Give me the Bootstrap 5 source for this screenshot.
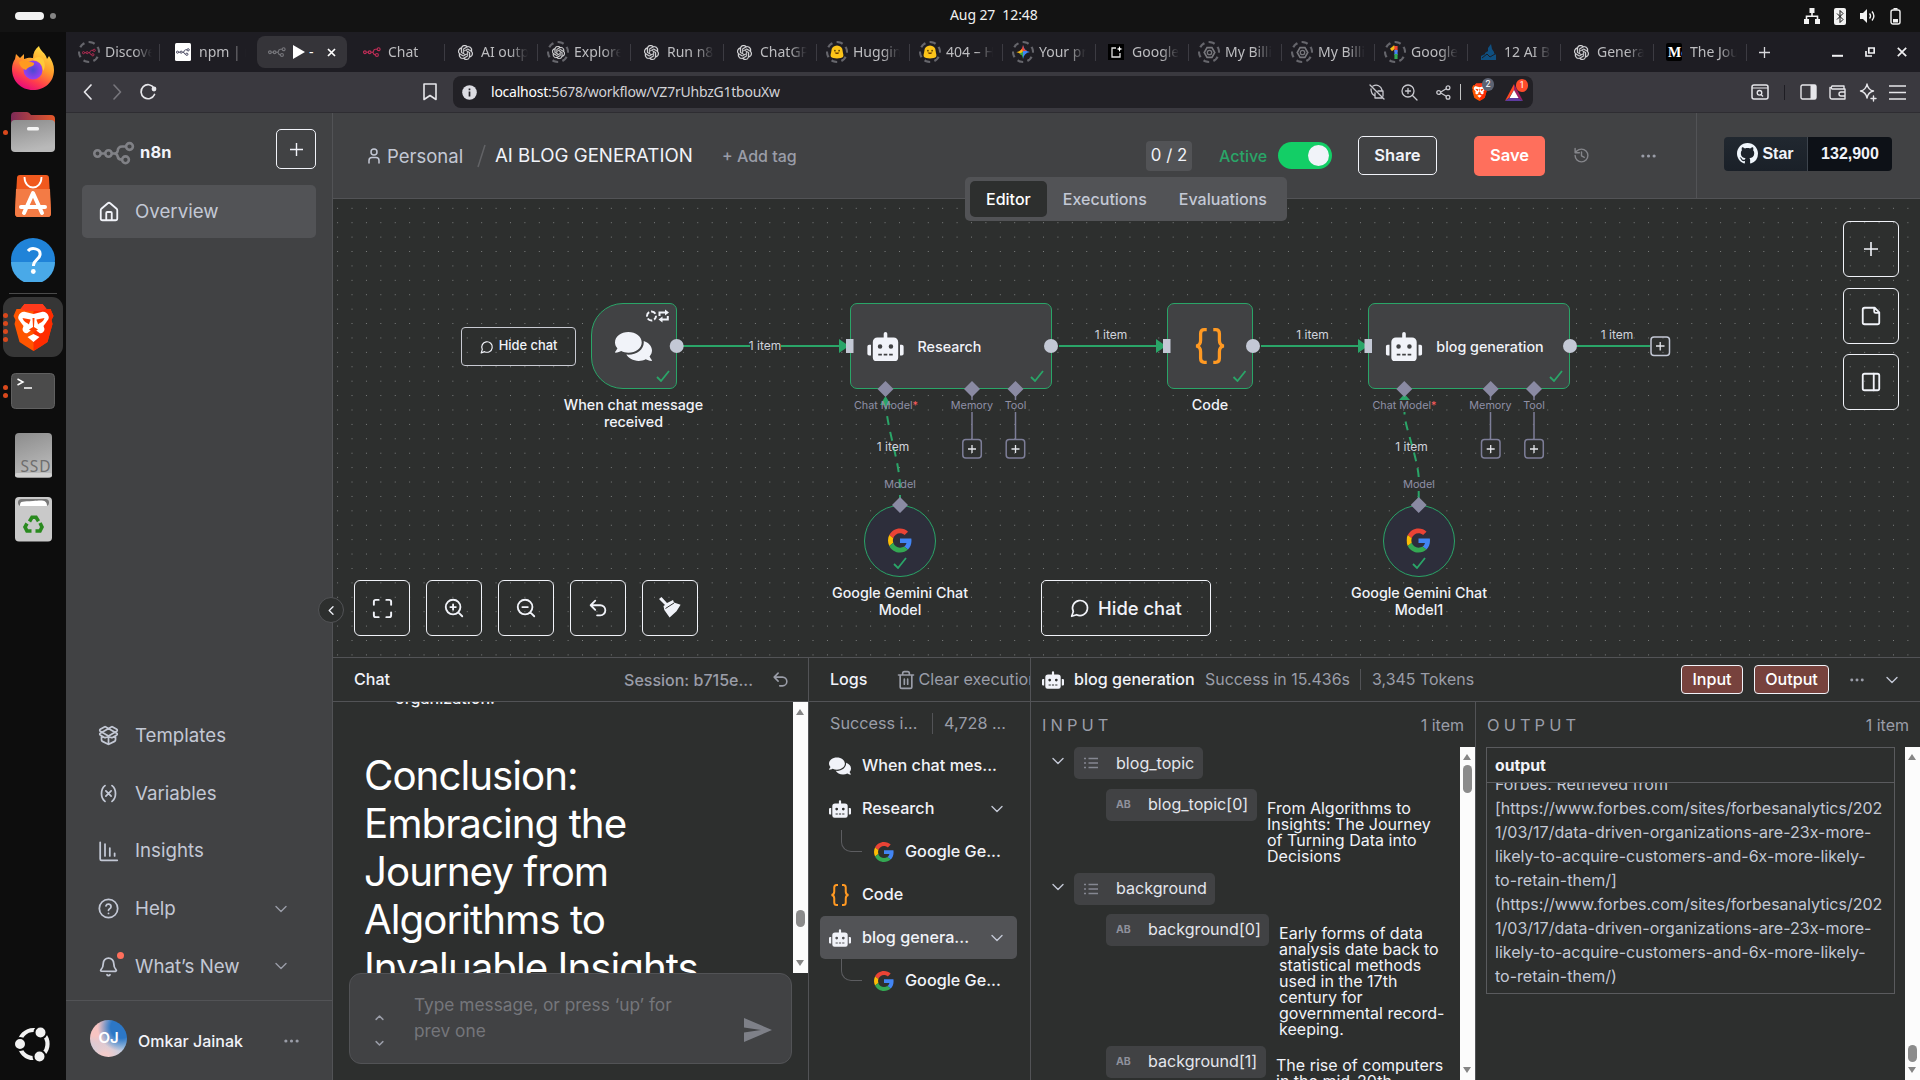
<!DOCTYPE html>
<html lang="en" data-bs-theme="dark">
<head>
<meta charset="utf-8">
<title>AI BLOG GENERATION - n8n</title>
<link href="https://cdn.jsdelivr.net/npm/bootstrap@5.3.0/dist/css/bootstrap.min.css" rel="stylesheet">
<style>
:root{--panel:#414244;--canvas:#2d2f2e;--line:#525356;--raise:#525356;--ink:#f1f3f9;--soft:#c3c8d5;--dim:#9a9da8;--ok:#2aa568;--pin:#8a8aa3}
html,body{height:1080px;overflow:hidden}
body{font-family:Inter,"Liberation Sans",sans-serif;font-size:16.1px;line-height:1.25;background:#0d0d0d;color:var(--ink);margin:0}
svg{display:block;flex:none}
.ln{fill:none;stroke:currentColor;stroke-width:2;stroke-linecap:round;stroke-linejoin:round}
.fl{fill:currentColor}
.sysfont{font-family:"Noto Sans","Open Sans",sans-serif}
.nw{white-space:nowrap}
.w500{font-weight:500}
.soft{color:var(--soft)}.dim{color:var(--dim)}

/* desktop bar */
.topbar{height:32px;background:#131313;position:relative;font-size:14px}
.pill{width:29px;height:8px;border-radius:4px;background:#f2f2f2;margin-left:15px}
.pdot{width:6px;height:6px;border-radius:3px;background:#858585;margin-left:6px}
.clock{position:absolute;left:950px;top:0;line-height:30px;white-space:pre;color:#f0f0f0;letter-spacing:-.1px}
.tray{gap:14px;padding-right:18px;color:#f2f2f2}

/* dock */
.dock{width:66px;height:1048px;background:#0d0d0d;padding-top:4px}
.slot{height:64px;position:relative}
.slot-on::before{content:"";position:absolute;left:3px;top:2px;width:60px;height:60px;border-radius:11px;background:#363636}
.slot svg{position:relative}
.dock-sep{height:3px;padding:1px 9px}
.dock-sep div{height:1px;background:#4a4a4a}
.runs{position:absolute;left:3px;top:0;height:64px;width:5px;display:flex;flex-direction:column;justify-content:center;gap:3px}
.runs i{width:5px;height:5px;border-radius:50%;background:#d9481c}

/* browser chrome */
.browser{width:1854px;height:1048px}
.tabstrip{height:40px;background:#1e1d23;color:#bdbdc0;font-size:14px}
.btab{width:93px;flex:none;padding-left:10px;position:relative;height:40px}
.btab::after{content:"";position:absolute;right:-1px;top:12px;width:1px;height:17px;background:#3c3b42}
.btab.nosep::after{display:none}
.fav{width:22px;height:22px;display:flex;align-items:center;justify-content:center;position:relative;flex:none;color:#dcdcde}
.ring::before{content:"";position:absolute;left:0;top:0;width:22px;height:22px;border-radius:50%;border:2px dashed #66666c}
.ttl{margin-left:5px;width:47px;overflow:hidden;white-space:nowrap;-webkit-mask-image:linear-gradient(90deg,#000 62%,transparent);line-height:20px}
.btab.act{width:90px;height:32px;margin:0 4px 0 5px;background:#353439;border-radius:8px;color:#fff}
.toolbar{height:41px;background:#3a393f;border-bottom:1px solid #2e2d32;color:#e6e6ea}
.urlbox{width:1080px;height:32px;border-radius:8px;background:#222126;font-size:14px;color:#d2d2d6}
.urltxt{letter-spacing:-.23px}
.bubble{position:absolute;font-size:9px;line-height:13px;height:13px;width:12px;text-align:center;border-radius:6px;color:#fff;font-family:Roboto,sans-serif}

/* sidebar */
.side{width:267px;height:967px;background:var(--panel);border-right:1px solid var(--line);position:relative}
.side-head{height:72px;padding:16px 16px 0 27px}
.brandtxt{font-weight:700;font-size:16.4px;margin-left:5px;letter-spacing:.2px}
.sqbtn{width:40px;height:40px;border:1px solid var(--ink);border-radius:5px}
.sitem{height:57.6px;padding-left:32px;font-size:18.7px;color:var(--soft)}
.sitem svg{margin-right:16px}
.sitem.sel{margin:0 16px;height:53px;background:var(--raise);border-radius:5px;padding-left:16px}
.userrow{height:80px;border-top:1px solid var(--line);padding:0 35px 0 24px}
.ava{width:37px;height:37px;border-radius:50%;background:radial-gradient(circle at 85% 20%,#2c77c6 25%,transparent 55%),radial-gradient(circle at 15% 20%,#f7c4c2 20%,transparent 55%),radial-gradient(circle at 40% 100%,#f2cccb 10%,transparent 50%),#b9cfe6;font-size:15px;font-weight:600;color:#fff}
.collapse-btn{position:absolute;left:252px;top:484px;width:26px;height:26px;border-radius:50%;background:var(--canvas);border:1px solid var(--line);z-index:5}

/* workflow header */
.wf{width:1587px;height:967px}
.wfhead{height:86px;background:var(--panel);border-bottom:1px solid var(--line)}
.badgebox{height:30px;width:46px;background:var(--raise);border-radius:4px;font-size:16.8px}
.toggle{width:54px;height:27px;border-radius:14px;background:#13ce66;padding:3px}
.toggle i{display:block;width:21px;height:21px;border-radius:50%;background:#f1f3f9;margin-left:auto;margin-right:0}
.wbtn{height:40px;border-radius:5px;font-weight:600;font-size:16.5px}
.wbtn.out{border:1px solid var(--ink);width:79px;height:39px}
.wbtn.save{background:#ff6f5c;width:71px;color:#fff}
.ghwrap{width:224px;height:86px;border-left:1px solid var(--line);padding-left:27px;font-family:"Liberation Sans",Arial,sans-serif}
.gh1{width:84px;height:34px;background:linear-gradient(#212830,#1a2028);border-radius:4px 0 0 4px;border-right:1px solid #3d444d;font-weight:700;font-size:16px}
.gh2{width:84px;height:34px;background:#0d1117;border-radius:0 4px 4px 0;font-weight:700;font-size:16px}
.modes{position:absolute;left:632px;top:64px;width:322px;height:44px;background:var(--raise);border-radius:5px;padding:4px 5px;z-index:4;font-size:16.05px;font-weight:500;color:var(--soft)}
.modes div{height:36px;border-radius:5px;padding:1px 16px 0}
.modes .cur{background:var(--canvas);color:#fff}

/* canvas */
.flow{height:458px;position:relative;overflow:hidden;background-color:var(--canvas);background-image:radial-gradient(circle at 50% 50%,#808282 0,#808282 .55px,transparent .95px);background-size:14.412px 14.412px;background-position:-2.6px 2.1px}
.stage{position:absolute;left:-333px;top:-199px;width:1920px;height:1080px}
.stage>*{position:absolute}
.node{height:86px;width:86px;border:1.6px solid var(--ok);border-radius:7px;background:var(--panel)}
.wide{width:202px}
.gem{width:72px;height:72px;border-radius:50%;background:#2d2e3b}
.cap{font-size:14.3px;line-height:17.3px;font-weight:500;text-align:center;transform:translateX(-50%);white-space:nowrap}
.tiny{font-size:10.8px;line-height:14px;color:#8f90a6;transform:translate(-50%,-50%);white-space:nowrap}
.edge{font-size:12px;line-height:14px;color:#d0d3dc;transform:translate(-50%,-50%);white-space:nowrap}
.ctl{width:56px;height:56px;border:1px solid var(--ink);border-radius:6px}
.hidec{border:1px solid #c8cad2;border-radius:4px;font-size:12.9px;font-weight:500;width:115px;height:39px}
.hidebig{border:1px solid var(--ink);border-radius:5px;width:170px;height:56px;font-size:18.4px;font-weight:500}

/* bottom panels */
.bottom{height:423px;background:var(--canvas);border-top:1px solid var(--line)}
.colx{border-right:1px solid var(--line);height:422px;overflow:hidden;flex:none}
.phead{height:44px;border-bottom:1px solid var(--line);white-space:nowrap;overflow:hidden;flex:none}
.sbar{width:15px;background:#fcfcfc;position:relative;flex:none}
.sbar::before,.sbar::after{content:"";position:absolute;left:3px;border:4.5px solid transparent}
.sbar::before{top:3px;border-bottom:6px solid #858585}
.sbar::after{bottom:3px;border-top:6px solid #858585}
.sbar i{position:absolute;left:3px;width:9px;border-radius:5px;background:#8b8b8b}
.reply{height:271px;overflow:hidden}
.reply h1{font-size:40.3px;line-height:48px;font-weight:400;letter-spacing:-1px;margin:0}
.prompt{margin:0 16px 0 16px;width:443px;height:91px;background:var(--panel);border:1px solid var(--line);border-radius:12px;color:#75767b;font-size:17.3px;line-height:26px}
.lrow{height:43px;padding:0 14px 0 9px;margin:0 13px 0 11px;border-radius:5px;font-size:16.2px;font-weight:500;white-space:nowrap}
.lrow.sel{background:#525356}
.elbow{width:21px;height:22px;border-left:1.6px solid #5c5d60;border-bottom:1.6px solid #5c5d60;border-bottom-left-radius:10px;margin:-22px 12px 0 12px}
.vsep{width:1px;height:21px;background:var(--line)}
.obtn{height:29px;border:1px solid var(--ink);border-radius:4px;background:#77423d;font-size:16.1px;font-weight:500}
.sp{letter-spacing:4.1px;font-size:16.4px}
.tag{height:32px;background:#414244;border-radius:5px;color:#e4e6ec;font-size:16.1px;white-space:nowrap;flex:none}
.val{font-size:16.05px;line-height:16px;color:#f1f3f9;white-space:nowrap;margin-left:10px}
.ab{font-size:10.5px;font-weight:700;color:#8f919c;width:15px}
.otable{width:409px;border:1px solid #5a5b5e;height:247px;overflow:hidden}
.otable .oh{height:35px;border-bottom:1px solid #5a5b5e;padding:5px 8px 0;font-weight:700;font-size:15.8px;line-height:26px}
.otable .ob{height:211px;overflow:hidden;padding-left:8px;font-size:16.03px;line-height:24px;color:var(--soft);white-space:nowrap}
</style>
<script src="https://cdn.jsdelivr.net/npm/bootstrap@5.3.0/dist/js/bootstrap.bundle.min.js"></script>
</head>
<body>
<svg width="0" height="0" class="position-absolute">
<defs>
<symbol id="n8n" viewBox="0 0 42 24"><g fill="none" stroke="currentColor" stroke-width="2.6"><circle cx="4.5" cy="12.5" r="3.2"/><circle cx="15.5" cy="12.5" r="3.2"/><circle cx="36.5" cy="5.5" r="3.4"/><circle cx="32.5" cy="18.8" r="3.4"/><path d="M7.7 12.5h4.6M18.7 12.5h2.6c2 0 3-1 3.3-2.6.4-3 2-4.4 4.500-4.400h4M21.300 12.500c2 0 3 1 3.300 2.800.4 2.600 1.800 3.500 4.500 3.500"/></g></symbol>
<symbol id="chats" viewBox="0 0 576 512"><path class="fl" d="M416 192c0-88.400-93.100-160-208-160S0 103.600 0 192c0 34.300 14.100 65.900 38 92-13.400 30.200-35.500 54.200-35.800 54.500-2.200 2.300-2.800 5.700-1.500 8.700S4.800 352 8 352c36.600 0 66.900-12.300 88.700-25 32.200 15.700 70.300 25 111.300 25 114.900 0 208-71.600 208-160zm122 220c23.900-26 38-57.700 38-92 0-66.900-53.500-124.200-129.300-148.100.9 6.600 1.300 13.300 1.300 20.100 0 105.900-107.700 192-240 192-10.800 0-21.300-.8-31.700-1.900C207.800 439.600 281.800 480 368 480c41 0 79.100-9.200 111.300-25 21.800 12.700 52.100 25 88.700 25 3.200 0 6.100-1.900 7.300-4.800 1.300-2.900.7-6.300-1.500-8.700-.3-.2-22.400-24.200-35.800-54.500z"/></symbol>
<symbol id="robot" viewBox="0 0 640 512"><path class="fl" d="M32,224H64V416H32A31.960,31.960,0,0,1,0,384V256A31.960,31.960,0,0,1,32,224Zm512-48V448a64.060,64.060,0,0,1-64,64H160a64.060,64.060,0,0,1-64-64V176a79.970,79.970,0,0,1,80-80H288V32a32,32,0,0,1,64,0V96H464A79.970,79.970,0,0,1,544,176ZM264,256a40,40,0,1,0-40,40A40,40,0,0,0,264,256Zm-8,128H192v32h64Zm96,0H288v32h64ZM456,256a40,40,0,1,0-40,40A40,40,0,0,0,456,256Zm-8,128H384v32h64ZM640,256V384a31.960,31.960,0,0,1-32,32H576V224h32A31.960,31.960,0,0,1,640,256Z"/></symbol>
<symbol id="goog" viewBox="0 0 48 48"><path fill="#EA4335" d="M24 9.500c3.540 0 6.710 1.220 9.210 3.600l6.850-6.850C35.900 2.380 30.470 0 24 0 14.620 0 6.510 5.380 2.560 13.220l7.980 6.190C12.430 13.720 17.740 9.500 24 9.500z"/><path fill="#4285F4" d="M46.980 24.550c0-1.570-.15-3.090-.38-4.550H24v9.020h12.940c-.58 2.960-2.260 5.480-4.780 7.180l7.730 6c4.510-4.180 7.090-10.360 7.090-17.650z"/><path fill="#FBBC05" d="M10.530 28.590c-.48-1.450-.76-2.990-.76-4.590s.27-3.140.76-4.590l-7.980-6.190C.92 16.460 0 20.120 0 24c0 3.880.92 7.540 2.560 10.780l7.970-6.190z"/><path fill="#34A853" d="M24 48c6.480 0 11.930-2.130 15.890-5.810l-7.730-6c-2.150 1.450-4.920 2.300-8.160 2.300-6.260 0-11.570-4.220-13.470-9.910l-7.980 6.190C6.510 42.620 14.620 48 24 48z"/></symbol>
<symbol id="gpt" viewBox="0 0 24 24"><path class="fl" stroke="currentColor" stroke-width=".4" d="M22.2819 9.8211a5.9847 5.9847 0 0 0-.5157-4.9108 6.0462 6.0462 0 0 0-6.5098-2.9A6.0651 6.0651 0 0 0 4.9807 4.1818a5.9847 5.9847 0 0 0-3.9977 2.9 6.0462 6.0462 0 0 0 .7427 7.0966 5.98 5.98 0 0 0 .511 4.9107 6.051 6.051 0 0 0 6.5146 2.9001A5.9847 5.9847 0 0 0 13.2599 24a6.0557 6.0557 0 0 0 5.7718-4.2058 5.9894 5.9894 0 0 0 3.9977-2.9001 6.0557 6.0557 0 0 0-.7475-7.0729zm-9.022 12.6081a4.4755 4.4755 0 0 1-2.8764-1.0408l.1419-.0804 4.7783-2.7582a.7948.7948 0 0 0 .3927-.6813v-6.7369l2.02 1.1686a.071.071 0 0 1 .038.052v5.5826a4.504 4.504 0 0 1-4.4945 4.4944zm-9.6607-4.1254a4.4708 4.4708 0 0 1-.5346-3.0137l.142.0852 4.783 2.7582a.7712.7712 0 0 0 .7806 0l5.8428-3.3685v2.3324a.0804.0804 0 0 1-.0332.0615L9.74 19.9502a4.4992 4.4992 0 0 1-6.1408-1.6464zM2.3408 7.8956a4.485 4.485 0 0 1 2.3655-1.9728V11.6a.7664.7664 0 0 0 .3879.6765l5.8144 3.3543-2.0201 1.1685a.0757.0757 0 0 1-.071 0l-4.8303-2.7865A4.504 4.504 0 0 1 2.3408 7.872zm16.5963 3.8558L13.1038 8.364 15.1192 7.2a.0757.0757 0 0 1 .071 0l4.8303 2.7913a4.4944 4.4944 0 0 1-.6765 8.1042v-5.6772a.79.79 0 0 0-.407-.667zm2.0107-3.0231l-.142-.0852-4.7735-2.7818a.7759.7759 0 0 0-.7854 0L9.409 9.2297V6.8974a.0662.0662 0 0 1 .0284-.0615l4.8303-2.7866a4.4992 4.4992 0 0 1 6.6802 4.66zM8.3065 12.863l-2.02-1.1638a.0804.0804 0 0 1-.038-.0567V6.0742a4.4992 4.4992 0 0 1 7.3757-3.4537l-.142.0805L8.704 5.459a.7948.7948 0 0 0-.3927.6813zm1.0976-2.3654l2.602-1.4998 2.6069 1.4998v2.9994l-2.5974 1.4997-2.6067-1.4997Z"/></symbol>
<symbol id="check" viewBox="0 0 14 12"><path fill="none" stroke="#2aa568" stroke-width="1.8" d="M1 7l4 4L13 1"/></symbol>
<symbol id="down" viewBox="0 0 12 8"><path class="ln" style="stroke-width:1.4" d="M1 1.500l5 5 5-5"/></symbol>
<symbol id="undo" viewBox="0 0 24 24"><path class="ln" d="M9 14 4 9l5-5M4 9h10.500a5.500 5.500 0 0 1 0 11H11"/></symbol>
<symbol id="bubblei" viewBox="0 0 24 24"><path class="ln" d="M7.900 20A9 9 0 1 0 4 16.100L2 22Z"/></symbol>
<symbol id="braces" viewBox="0 0 36 44"><path fill="none" stroke="#ff9922" stroke-width="4" d="M14 2h-3c-3 0-4.500 1.600-4.500 5v8c0 4-1.500 6.500-5.500 7 4 .5 5.500 3 5.500 7v8c0 3.400 1.500 5 4.500 5h3M22 2h3c3 0 4.500 1.600 4.500 5v8c0 4 1.500 6.500 5.500 7-4 .5-5.500 3-5.500 7v8c0 3.400-1.500 5-4.500 5h-3"/></symbol>
<symbol id="hug" viewBox="0 0 16 16"><path fill="#fcc419" d="M8 .5a6.500 6.500 0 0 1 6.500 6.500c0 2 1.500 4 .5 6.500-2 2.500-12 2.500-14 0-1-2.500.5-4.500.5-6.500A6.500 6.500 0 0 1 8 .5z"/><circle cx="5.600" cy="6.500" r="1" fill="#5b4300"/><circle cx="10.400" cy="6.500" r="1" fill="#5b4300"/><path d="M5.300 8.500c1.500 2.500 4 2.500 5.400 0z" fill="#6b3a00"/></symbol>
<symbol id="bill" viewBox="0 0 16 16"><path fill="none" stroke="currentColor" stroke-width="2" d="M5 2h6l3.500 6-3.500 6H5L1.500 8z"/><circle cx="8" cy="8" r="2.700" fill="none" stroke="currentColor" stroke-width="1.600"/></symbol>
<symbol id="list" viewBox="0 0 14 12"><path fill="none" stroke="#858791" stroke-width="1.400" d="M0 1.500h2M4.500 1.500H14M0 6h2M4.500 6H14M0 10.500h2M4.500 10.500H14"/></symbol>
<symbol id="lion" viewBox="0 0 40 48"><path fill="#ff5500" d="M11 1h18l4 5h4l3 7-2 4 1 4-5 18-6 4-8 5-8-5-6-4L1 21l1-4-2-4 3-7h4z"/><path fill="#ff2000" d="M20 1h9l4 5h4l3 7-2 4 1 4-5 18-6 4-8 5z" opacity=".8"/><path fill="#ff3a1c" d="M11 1h18l4 5-6 2H13L7 6z"/><path fill="#fff" d="M5 13c1-3 4-5 7-4l8 2 8-2c3-1 6 1 7 4 1 3-1 4-2 6l-3 4 1 3c0 3-3 5-5 4l-4-3h-4l-4 3c-2 1-5-1-5-4l1-3-3-4c-1-2-3-3-2-6zM14 34l6-3 6 3-6 5z"/><path fill="#ff4000" d="M9 15l8 1.500c0 2-1.500 3-1.500 5-2-2-5-2-6.500-6.500zM31 15l-8 1.500c0 2 1.500 3 1.500 5 2-2 5-2 6.500-6.500zM19 15h2l-.5 9 4 2.500-4.500 3-4.500-3 4-2.500z"/></symbol>
<symbol id="dots3" viewBox="0 0 16 4"><g class="fl"><circle cx="2" cy="2" r="1.700"/><circle cx="8" cy="2" r="1.700"/><circle cx="14" cy="2" r="1.700"/></g></symbol>
</defs>
</svg>

<!-- desktop bar -->
<div class="topbar sysfont d-flex align-items-center">
  <div class="pill"></div><div class="pdot"></div>
  <div class="clock">Aug 27  12:48</div>
  <div class="tray d-flex align-items-center ms-auto">
    <svg width="16" height="16" viewBox="0 0 16 16"><path fill="currentColor" d="M5.500 0h5v5h-5zM0 11h5v5H0zM11 11h5v5h-5z"/><path d="M8 5v3M2.500 11V8.300h11V11" fill="none" stroke="currentColor" stroke-width="1.600"/></svg>
    <svg width="12" height="17" viewBox="0 0 12 17"><rect width="12" height="17" rx="2" fill="currentColor"/><path d="M3 5.500l6 6-3 3V2.500l3 3-6 6" fill="none" stroke="#131313"/></svg>
    <svg width="16" height="16" viewBox="0 0 16 16"><path fill="currentColor" d="M0 5h3l4-4v14l-4-4H0z"/><path d="M9.500 5.500c1.200 1.500 1.200 3.500 0 5M12 3.500c2.500 3 2.500 6 0 9" fill="none" stroke="currentColor" stroke-width="1.400"/></svg>
    <svg width="12" height="17" viewBox="0 0 12 17"><rect x="1" y="2" width="9" height="14" rx="2" fill="none" stroke="currentColor" stroke-width="1.400"/><path d="M3.500.8h4" stroke="currentColor" stroke-width="1.600"/><rect x="3" y="11" width="5" height="3.500" fill="currentColor"/></svg>
  </div>
</div>

<div class="d-flex">
<!-- dock -->
<nav class="dock d-flex flex-column">
  <div class="slot d-flex align-items-center justify-content-center">
    <svg width="44" height="46" viewBox="0 0 44 46"><defs><linearGradient id="ff" x1=".8" y1="0" x2=".3" y2="1"><stop offset="0" stop-color="#ffe847"/><stop offset=".45" stop-color="#ff9a2a"/><stop offset=".75" stop-color="#ff3d4c"/><stop offset="1" stop-color="#e5067f"/></linearGradient><radialGradient id="fp"><stop offset="0" stop-color="#4a4ad0"/><stop offset="1" stop-color="#9a3ff0"/></radialGradient></defs><path fill="url(#ff)" d="M28 1c1 5 7 7 8 13l2-3c3 4 5 9 5 14 0 12-9 20-21 20S1 36 1 24c0-4 1-7 3-10l1-5 4 4 4-4v5c5-2 8-1 9-1 0-5 2-9 6-12z"/><circle cx="22" cy="25" r="9.500" fill="url(#fp)"/><path fill="#ff9a20" d="M8 17c5-3 9-1 15 1 1 4-6 3-8 7-3-1-6-3-7-8z"/><path fill="#ffc93a" d="M22 15c5 0 10 4 10 11 3-4 2-10-1-13-3-2-7-1-9 2z"/></svg>
  </div>
  <div class="slot d-flex align-items-center justify-content-center"><span class="runs"><i></i></span>
    <svg width="44" height="42" viewBox="0 0 44 42"><defs><linearGradient id="fo"><stop offset="0" stop-color="#7d2a57"/><stop offset="1" stop-color="#e4582a"/></linearGradient><linearGradient id="gy" x2=".3" y2="1"><stop offset="0" stop-color="#8c8c8c"/><stop offset="1" stop-color="#b9b9b9"/></linearGradient></defs><path fill="url(#fo)" d="M0 5q0-4 4-4h12q2 0 4 3h20q4 0 4 4v14H0z"/><rect y="9" width="44" height="32" rx="4" fill="url(#gy)"/><rect x="16" y="16" width="12" height="3.500" rx="1.500" fill="#f5f5f5"/></svg>
  </div>
  <div class="slot d-flex align-items-center justify-content-center">
    <svg width="36" height="42" viewBox="0 0 36 42"><path fill="#f0591e" d="M2 3q0-3 3-3h26q3 0 3 3l2 35q0 4-3 4H3q-3 0-3-4z"/><path fill="#f37b45" d="M1 14h34l1 24q0 4-3 4H3q-3 0-3-4z"/><path d="M9.500 2c0 14 17 14 17 0" fill="none" stroke="#fff" stroke-width="1.800"/><path d="M9 38l9-20 9 20M6 32h24" fill="none" stroke="#fff" stroke-width="4" stroke-linecap="round" stroke-linejoin="round"/></svg>
  </div>
  <div class="slot d-flex align-items-center justify-content-center">
    <svg width="44" height="44" viewBox="0 0 44 44"><circle cx="22" cy="22" r="22" fill="#2083d8"/><path fill="#49a9e8" d="M0 24h44a22 22 0 0 1-44 0z"/><path d="M17 13c3-4 13-3 12 4-.5 4-6 5-6.500 10v1" fill="none" stroke="#fff" stroke-width="3"/><circle cx="22.300" cy="33.500" r="2.400" fill="#fff"/></svg>
  </div>
  <div class="dock-sep"><div></div></div>
  <div class="slot slot-on d-flex align-items-center justify-content-center"><span class="runs"><i></i><i></i><i></i><i></i></span>
    <svg width="41" height="48"><use href="#lion"/></svg>
  </div>
  <div class="slot d-flex align-items-center justify-content-center"><span class="runs"><i></i><i></i></span>
    <svg width="44" height="36" viewBox="0 0 44 36"><rect x=".5" y=".5" width="43" height="35" rx="4" fill="#4b4b4b" stroke="#606060"/><path d="M6.500 6l5.500 3-5.500 3M13 15h8" fill="none" stroke="#fff" stroke-width="1.500"/></svg>
  </div>
  <div class="slot d-flex align-items-center justify-content-center">
    <svg width="37" height="45" viewBox="0 0 37 45"><rect width="37" height="44.500" rx="4" fill="url(#gy)"/><rect y="40" width="37" height="4.500" rx="2" fill="#d0d0d0"/><text x="5.500" y="38.500" font-size="15.500" textLength="30" fill="#6e6e6e" font-family="Noto Sans">SSD</text></svg>
  </div>
  <div class="slot d-flex align-items-center justify-content-center">
    <svg width="37" height="45" viewBox="0 0 37 45"><rect width="37" height="44.500" rx="4" fill="#c9c9c9"/><rect x="3" y="2" width="31" height="7" rx="3.500" fill="#777"/><path d="M5 9c0-6 3-4 13-5s14-1 14 5z" fill="#fff"/><g fill="none" stroke="#2a8a1f" stroke-width="3.600"><path d="M14.500 24.500l2.500-4.200h4l2.500 4"/><path d="M25 26l2 4-2 4h-4.500"/><path d="M16.500 34H12l-2-4 2-3.500"/></g></svg>
  </div>
  <div class="mt-auto d-flex justify-content-center" style="padding-bottom:18px">
    <svg width="36" height="36" viewBox="0 0 36 36"><circle cx="18.500" cy="18" r="14" fill="none" stroke="#f2f2f2" stroke-width="4.200"/><g fill="#f2f2f2" stroke="#0d0d0d" stroke-width="2"><circle cx="5" cy="18" r="6"/><circle cx="25.500" cy="6.500" r="6"/><circle cx="24.500" cy="30.500" r="6"/></g></svg>
  </div>
</nav>

<div class="browser d-flex flex-column">
<!-- browser tabs -->
<div class="tabstrip sysfont d-flex align-items-center ps-0">
  <div class="btab d-flex align-items-center" style="padding-left:12px"><span class="fav ring"><svg width="14" height="9" color="#c02d57"><use href="#n8n"/></svg></span><span class="ttl">Discover</span></div>
  <div class="btab nosep d-flex align-items-center" style="padding-left:13px"><span class="fav"><svg width="16" height="18" viewBox="0 0 16 18"><rect width="16" height="18" rx="1.500" fill="#fff"/><use href="#n8n" x="1" y="5" width="14" height="8" color="#33334f"/></svg></span><span class="ttl">npm | n8</span></div>
  <div class="btab nosep act d-flex align-items-center" style="padding-left:10px"><svg width="18" height="12" color="#77777c" style="margin-left:1px"><use href="#n8n"/></svg><svg width="12" height="14" viewBox="0 0 12 14" style="margin-left:7px"><path d="M0 0l12 7-12 7z" fill="#fff"/></svg><span class="ms-1">-</span><svg width="9" height="9" viewBox="0 0 9 9" style="margin-left:13px"><path d="M1 1l7 7M8 1L1 8" stroke="#fff" stroke-width="1.700"/></svg></div>
  <div class="btab d-flex align-items-center" style="padding-left:10px"><span class="fav"><svg width="18" height="12" color="#c02d57"><use href="#n8n"/></svg></span><span class="ttl">Chat</span></div>
  <div class="btab d-flex align-items-center"><span class="fav"><svg width="15" height="15"><use href="#gpt"/></svg></span><span class="ttl">AI output</span></div>
  <div class="btab d-flex align-items-center"><span class="fav ring"><svg width="13" height="13"><use href="#gpt"/></svg></span><span class="ttl">Explore</span></div>
  <div class="btab d-flex align-items-center"><span class="fav"><svg width="15" height="15"><use href="#gpt"/></svg></span><span class="ttl">Run n8n</span></div>
  <div class="btab d-flex align-items-center"><span class="fav"><svg width="15" height="15"><use href="#gpt"/></svg></span><span class="ttl">ChatGPT</span></div>
  <div class="btab d-flex align-items-center"><span class="fav ring"><svg width="14" height="14"><use href="#hug"/></svg></span><span class="ttl">Hugging</span></div>
  <div class="btab d-flex align-items-center"><span class="fav ring"><svg width="14" height="14"><use href="#hug"/></svg></span><span class="ttl">404 – H</span></div>
  <div class="btab d-flex align-items-center"><span class="fav ring"><svg width="14" height="14" viewBox="0 0 14 14"><path fill="#3f86f6" d="M7 0c.8 4 3 6.200 7 7-4 .8-6.200 3-7 7z"/><path fill="#e9443a" d="M7 0c.8 4 2 5 4 6H3.500C5.500 5 6.400 3 7 0z"/><path fill="#f6b912" d="M0 7c3-.4 4.500-1 6-3l1 3-2 3C4 8 2 7.500 0 7z"/><path fill="#2fa951" d="M7 14c-.4-3-1.500-4.500-3.500-5.500L7 7z"/></svg></span><span class="ttl">Your pr</span></div>
  <div class="btab d-flex align-items-center"><span class="fav"><svg width="16" height="16" viewBox="0 0 16 16"><rect width="16" height="16" fill="#000"/><path d="M8 4H4v9h8V9" fill="none" stroke="#ddd" stroke-width="1.300"/><path d="M11.500 2l.8 2.200 2.200.8-2.200.8-.8 2.200-.8-2.200L8.500 5l2.200-.8z" fill="#fff"/></svg></span><span class="ttl">Google</span></div>
  <div class="btab d-flex align-items-center"><span class="fav ring"><svg width="13" height="13" color="#77777c"><use href="#bill"/></svg></span><span class="ttl">My Billin</span></div>
  <div class="btab d-flex align-items-center"><span class="fav ring"><svg width="13" height="13" color="#77777c"><use href="#bill"/></svg></span><span class="ttl">My Billin</span></div>
  <div class="btab d-flex align-items-center"><span class="fav ring"><svg width="12" height="14" viewBox="0 0 12 14"><path d="M2 5l4-3.500" stroke="#f6b912" stroke-width="3"/><path d="M7 1v6" stroke="#ea4335" stroke-width="3.200"/><path d="M7 5v5" stroke="#4285f4" stroke-width="3.200"/><path d="M7 9v5" stroke="#34a853" stroke-width="3.200"/></svg></span><span class="ttl">Google</span></div>
  <div class="btab d-flex align-items-center"><span class="fav"><svg width="15" height="17" viewBox="0 0 15 17"><path fill="#0f4f80" d="M0 12l4-2v6H0zM4 9l3-2v9H4zM7 4l3-4 1 5 2 3v8H7zM13 9l2 2v5h-2z"/><path d="M1 14l5-4 3 3 5-3" stroke="#1e1d23" fill="none"/></svg></span><span class="ttl">12 AI Bl</span></div>
  <div class="btab d-flex align-items-center"><span class="fav"><svg width="15" height="15"><use href="#gpt"/></svg></span><span class="ttl">General</span></div>
  <div class="btab d-flex align-items-center"><span class="fav"><svg width="16" height="18" viewBox="0 0 16 18"><rect width="16" height="18" rx="2" fill="#000"/><text x="2" y="14" font-size="14" font-weight="700" fill="#fff" font-family="Liberation Serif">Mc</text></svg></span><span class="ttl">The Jou</span></div>
  <svg width="11" height="11" viewBox="0 0 11 11" style="margin-left:13px"><path d="M5.500 0v11M0 5.500h11" stroke="#d8d8dc" stroke-width="1.300"/></svg>
  <div class="ms-auto d-flex align-items-center" style="gap:22px;padding-right:13px;color:#f0f0f2">
    <svg width="11" height="10" viewBox="0 0 11 10"><path d="M0 8.800h11" stroke="currentColor" stroke-width="2"/></svg>
    <svg width="10" height="10" viewBox="0 0 10 10"><path d="M1 4v5h6M3.800 1h5.400v5H3.800z" fill="none" stroke="currentColor" stroke-width="1.700"/></svg>
    <svg width="10" height="10" viewBox="0 0 10 10"><path d="M.8.8l8.400 8.400M9.200.8L.8 9.200" stroke="currentColor" stroke-width="1.700"/></svg>
  </div>
</div>
<!-- address bar -->
<div class="toolbar d-flex align-items-center">
  <svg width="9" height="16" viewBox="0 0 9 16" style="margin-left:17px"><path class="ln" style="stroke-width:1.700" d="M8 1L1.500 8 8 15"/></svg>
  <svg width="9" height="16" viewBox="0 0 9 16" style="margin-left:21px" color="#77767c"><path class="ln" style="stroke-width:1.600" d="M1 1l6.500 7L1 15"/></svg>
  <svg width="18" height="18" viewBox="0 0 18 18" style="margin-left:17px"><path class="ln" style="stroke-width:1.700" d="M15.500 11.500A7 7 0 1 1 15 5"/><circle cx="15" cy="6" r="2.400" class="fl"/></svg>
  <svg width="14" height="18" viewBox="0 0 14 18" style="margin-left:266px"><path class="ln" style="stroke-width:1.600" d="M1 1h12v15.500L7 12.500 1 16.500z"/></svg>
  <div class="urlbox sysfont d-flex align-items-center" style="margin-left:16px">
    <svg width="15" height="15" viewBox="0 0 15 15" style="margin-left:9px"><circle cx="7.500" cy="7.500" r="7.300" fill="#dcdce2"/><path d="M7.500 6.500v5M7.500 3.500v1.700" stroke="#222126" stroke-width="1.700"/></svg>
    <span class="nw urltxt" style="margin-left:14px"><span class="text-white">localhost</span>:5678/workflow/VZ7rUhbzG1tbouXw</span>
    <div class="ms-auto d-flex align-items-center" style="padding-right:10px;color:#c9c9cf">
      <svg width="16" height="16" viewBox="0 0 16 16"><path class="ln" style="stroke-width:1.300" d="M1 1l14 14M2 5c0 3 2 6 4 7M4 2c4-2 8 0 9 4M6 9v5h8M9 7h5v5"/></svg>
      <svg width="17" height="17" viewBox="0 0 17 17" style="margin-left:16px"><path class="ln" style="stroke-width:1.300" d="M7 1a6 6 0 1 0 0 12A6 6 0 0 0 7 1zM11.500 11.500L16 16M7 4.500v5M4.500 7h5"/></svg>
      <svg width="15" height="15" viewBox="0 0 15 15" style="margin-left:18px"><path class="ln" style="stroke-width:1.300" d="M4 7.500l7.500-4.500M4 7.500l7.500 4.500"/><g fill="#222126" stroke="currentColor" stroke-width="1.300"><circle cx="2.700" cy="7.500" r="1.900"/><circle cx="12" cy="2.700" r="1.900"/><circle cx="12" cy="12.300" r="1.900"/></g></svg>
      <div class="bg-light opacity-75" style="width:1px;height:16px;margin-left:9px"></div>
      <span class="position-relative" style="margin-left:11px"><svg width="15" height="18"><use href="#lion"/></svg><span class="bubble" style="left:10px;top:-5px;background:#5d6372">2</span></span>
      <span class="position-relative" style="margin-left:18px"><svg width="18" height="17" viewBox="0 0 18 17"><path fill="#ff4724" d="M9 0v6L4 14l-4 3z"/><path fill="#9e1f63" d="M9 0l9 17-5-3-4-8z"/><path fill="#5e3ba0" d="M0 17l4-3h9l5 3z"/><path fill="#fff" d="M9 6l4.500 8h-9z"/></svg><span class="bubble" style="left:11px;top:-5px;background:#ff4c2b">1</span></span>
    </div>
  </div>
  <div class="ms-auto d-flex align-items-center" style="padding-right:14px;gap:12px">
    <svg width="18" height="16" viewBox="0 0 18 16"><rect x="1" y="1" width="16" height="14" rx="2" class="ln" style="stroke-width:1.500"/><path d="M1 4h16" stroke="currentColor"/><circle cx="8.500" cy="8.800" r="2.300" class="ln" style="stroke-width:1.300"/><path d="M10 10.500l2 2" stroke="currentColor" stroke-width="1.300"/></svg>
    <div style="width:1px;height:15px;background:#1e1d23;margin:0 3px 0 3px"></div>
    <svg width="17" height="16" viewBox="0 0 17 16"><rect x="1" y="1" width="15" height="14" rx="1.500" class="ln" style="stroke-width:1.400"/><path d="M10.500 1H16v14h-5.500z" fill="currentColor"/></svg>
    <svg width="18" height="17" viewBox="0 0 18 17"><path class="ln" style="stroke-width:1.400" d="M15 4V2H3a2 2 0 0 0 0 3h13v10H3a2 2 0 0 1-2-2V3.500M16 8h-4a2 2 0 0 0 0 4h4"/></svg>
    <svg width="18" height="19" viewBox="0 0 18 19"><path class="ln" style="stroke-width:1.400" d="M8 1c.8 4.500 2.500 6.200 6.500 7C10.500 9 8.800 10.800 8 15 7.200 10.800 5.500 9 1.500 8 5.500 7.200 7.200 5.500 8 1zM14.500 13v5M12 15.500h5"/></svg>
    <svg width="17" height="15" viewBox="0 0 17 15"><path d="M0 1h17M0 7.500h17M0 14h17" stroke="currentColor" stroke-width="1.600"/></svg>
  </div>
</div>

<!-- n8n application -->
<div class="d-flex">
<aside class="side d-flex flex-column">
  <div class="side-head d-flex align-items-start">
    <svg width="42" height="24" color="#808186" style="margin-top:12px"><use href="#n8n"/></svg><span class="brandtxt" style="margin-top:13px">n8n</span>
    <div class="sqbtn ms-auto d-flex align-items-center justify-content-center"><svg width="13" height="13" viewBox="0 0 13 13"><path d="M6.500 0v13M0 6.500h13" stroke="currentColor" stroke-width="1.400"/></svg></div>
  </div>
  <div class="sitem sel d-flex align-items-center">
    <svg width="22" height="22" viewBox="0 0 24 24" style="margin-right:15px" color="#f1f3f9"><path class="ln" d="M15 21v-8a1 1 0 0 0-1-1h-4a1 1 0 0 0-1 1v8M3 10a2 2 0 0 1 .7-1.500l7-6a2 2 0 0 1 2.600 0l7 6A2 2 0 0 1 21 10v9a2 2 0 0 1-2 2H5a2 2 0 0 1-2-2z"/></svg>Overview</div>
  <div class="mt-auto" style="margin-bottom:5px">
    <div class="sitem d-flex align-items-center"><svg width="21" height="21" viewBox="0 0 24 24"><path class="ln" d="M12 22v-9M15.200 2.200a1.700 1.700 0 0 1 1.600 0l4.600 2.700c.8.500.8 1.700 0 2.200L9 14.200a1.700 1.700 0 0 1-1.700 0L2.600 11.500c-.8-.5-.8-1.700 0-2.200zM20 13v3.900a2 2 0 0 1-1.100 1.800l-6 3a2 2 0 0 1-1.800 0l-6-3A2 2 0 0 1 4 16.900V13M21.400 11.500c.8-.5.8-1.700 0-2.200L8.900 2.200a1.700 1.700 0 0 0-1.600 0L2.600 4.900c-.8.500-.8 1.700 0 2.200l12.300 7.100a1.700 1.700 0 0 0 1.700 0z"/></svg>Templates</div>
    <div class="sitem d-flex align-items-center"><svg width="21" height="21" viewBox="0 0 24 24"><path class="ln" d="M8 21s-4-3-4-9 4-9 4-9M16 3s4 3 4 9-4 9-4 9M15 9l-6 6M9 9l6 6"/></svg>Variables</div>
    <div class="sitem d-flex align-items-center"><svg width="21" height="21" viewBox="0 0 24 24"><path class="ln" d="M2.500 1.500v19a1.500 1.500 0 0 0 1.500 1.500h18M8 17V3.500M13.500 17V8M19 17v-3"/></svg>Insights</div>
    <div class="sitem d-flex align-items-center"><svg width="21" height="21" viewBox="0 0 24 24"><circle class="ln" cx="12" cy="12" r="10.500"/><path class="ln" d="M9.100 9a3 3 0 0 1 5.800 1c0 2-2.900 2.700-2.900 4M12 17.500v.1"/></svg>Help<svg class="ms-auto dim" width="12" height="8" style="margin-right:45px"><use href="#down"/></svg></div>
    <div class="sitem d-flex align-items-center"><span class="position-relative"><svg width="21" height="22" viewBox="0 0 24 24"><path class="ln" d="M10.300 22a2 2 0 0 0 3.400 0M3.300 16.300A1 1 0 0 0 4 18h16a1 1 0 0 0 .7-1.700C19.400 15 18 13.500 18 9A6 6 0 0 0 6 9c0 4.500-1.400 6-2.700 7.300z"/></svg><i class="position-absolute rounded-circle" style="left:19px;top:-3px;width:7px;height:7px;background:#ff6f5c"></i></span>What’s New<svg class="ms-auto dim" width="12" height="8" style="margin-right:45px"><use href="#down"/></svg></div>
  </div>
  <div class="userrow d-flex align-items-center">
    <div class="ava d-flex align-items-center justify-content-center" style="margin-top:-4px">OJ</div>
    <span class="w500 nw" style="margin-left:11px;font-size:16px">Omkar Jainak</span>
    <svg class="ms-auto dim" width="15" height="4" style="margin-right:-2px"><use href="#dots3"/></svg>
  </div>
  <div class="collapse-btn d-flex align-items-center justify-content-center"><svg width="6" height="9" viewBox="0 0 6 9"><path class="ln" style="stroke-width:1.300" d="M5 .8L1.200 4.500 5 8.200"/></svg></div>
</aside>

<main class="wf position-relative d-flex flex-column">
  <header class="wfhead d-flex align-items-center">
    <svg class="soft" width="12" height="16" viewBox="0 0 12 16" style="margin-left:35px"><path class="ln" style="stroke-width:1.500" d="M1 15v-2.500a3 3 0 0 1 3-3h4a3 3 0 0 1 3 3V15"/><circle class="ln" style="stroke-width:1.500" cx="6" cy="4" r="3"/></svg>
    <span class="soft" style="margin-left:7px;font-size:18.500px;width:80px;padding-top:2px">Personal</span>
    <svg width="9" height="24" viewBox="0 0 9 24" style="margin-left:10px"><path d="M8 1L1 23" stroke="#626366" stroke-width="1.500"/></svg>
    <span class="nw" style="margin-left:9px;font-size:18.650px;width:200px">AI BLOG GENERATION</span>
    <span class="nw w500 dim" style="margin-left:27px;font-size:16px">+ Add tag</span>
    <div class="ms-auto d-flex align-items-center">
      <div class="badgebox d-flex align-items-center justify-content-center">0 / 2</div>
      <span class="w500" style="color:#2aa568;margin-left:27px;font-size:16px;width:48px">Active</span>
      <div class="toggle" style="margin-left:11px"><i></i></div>
      <div class="wbtn out d-flex align-items-center justify-content-center" style="margin-left:26px">Share</div>
      <div class="wbtn save d-flex align-items-center justify-content-center" style="margin-left:37px">Save</div>
      <svg width="17" height="17" viewBox="0 0 24 24" style="margin-left:28px;color:#85868b"><path class="ln" d="M3 12a9 9 0 1 0 9-9 9.750 9.750 0 0 0-6.700 2.700L3 8M3 2v6h6M12 7v5.500l4 2"/></svg>
      <svg width="15" height="4" class="dim" style="margin-left:51px;margin-right:40px"><use href="#dots3"/></svg>
      <div class="ghwrap d-flex align-items-center" style="padding-bottom:4px">
        <div class="gh1 d-flex align-items-center justify-content-center"><svg width="21" height="21" viewBox="0 0 16 16" style="margin-right:4px"><path fill="#f0f6fc" d="M8 0C3.580 0 0 3.580 0 8c0 3.540 2.290 6.530 5.470 7.590.4.070.55-.17.55-.38 0-.19-.01-.82-.01-1.490-2.010.37-2.530-.49-2.690-.94-.09-.23-.48-.94-.82-1.130-.28-.15-.68-.52-.01-.53.63-.01 1.080.58 1.230.82.72 1.210 1.870.87 2.330.66.070-.52.28-.87.51-1.070-1.780-.2-3.640-.89-3.640-3.950 0-.87.31-1.590.82-2.150-.08-.2-.36-1.020.08-2.120 0 0 .67-.21 2.200.82.64-.18 1.320-.27 2-.27s1.360.09 2 .27c1.530-1.040 2.200-.82 2.200-.82.44 1.100.16 1.920.08 2.120.51.56.82 1.270.82 2.150 0 3.070-1.870 3.750-3.650 3.950.29.25.54.73.54 1.480 0 1.070-.01 1.930-.01 2.200 0 .21.15.46.55.38A8.010 8.010 0 0 0 16 8c0-4.420-3.580-8-8-8z"/></svg>Star</div>
        <div class="gh2 d-flex align-items-center justify-content-center">132,900</div>
      </div>
    </div>
  </header>
  <div class="modes d-flex"><div class="cur d-flex align-items-center">Editor</div><div class="d-flex align-items-center">Executions</div><div class="d-flex align-items-center">Evaluations</div></div>

  <section class="flow"><div class="stage">
    <svg width="1920" height="1080" style="left:0;top:0"><g fill="none" stroke="#2aa568" stroke-width="2">
      <path d="M677 346H750M781 346H845M1059 346H1161M1261 346H1363M1577 346H1650"/>
      <path stroke-dasharray="9 7" stroke-dashoffset="-1" d="M900 505V488C900 460 885 425 885.500 396"/><path stroke-dasharray="9 7" d="M1418.700 477C1417 455 1404 425 1404.500 412"/><path d="M1418.700 500v-9"/></g>
      <path fill="#2aa568" d="M839 339l10 7-10 7zM1156 339l10 7-10 7zM1358 339l10 7-10 7zM880 405l5.500-9 5.500 9zM1399 400l5.500-6 5.500 6z"/>
      <g stroke="#7d7e98" stroke-width="1.500" fill="none"><path d="M972 392v8M972 412v28M1015.500 392v8M1015.500 412v28M1490.500 392v8M1490.500 412v28M1534 392v8M1534 412v28"/>
      <rect x="962.800" y="439.500" width="18.500" height="18.500" rx="3"/><rect x="1006.200" y="439.500" width="18.500" height="18.500" rx="3"/><rect x="1481.500" y="439.500" width="18.500" height="18.500" rx="3"/><rect x="1524.800" y="439.500" width="18.500" height="18.500" rx="3"/>
      <rect x="1651" y="337" width="18.500" height="18.500" rx="3" stroke="#c3c8d5"/></g>
      <path stroke="#e4e6ec" stroke-width="1.300" d="M968 449h8M972 445v8M1011.500 449h8M1015.500 445v8M1486.700 449h8M1490.700 445v8M1530 449h8M1534 445v8M1656 346h8.500M1660.200 342v8.500"/>
    </svg>
    <div class="hidec d-flex align-items-center justify-content-center" style="left:461px;top:327px"><svg width="14" height="14" style="margin-right:5px"><use href="#bubblei"/></svg>Hide chat</div>
    <div class="node" style="left:590.500px;top:303px;border-radius:32px 7px 7px 32px"></div>
    <div class="node wide" style="left:849.500px;top:303px"></div>
    <div class="node" style="left:1167px;top:303px"></div>
    <div class="node wide" style="left:1368px;top:303px"></div>
    <div class="node gem" style="left:864px;top:504.500px"></div>
    <div class="node gem" style="left:1383px;top:504.500px"></div>
    <svg width="1920" height="1080" style="left:0;top:0">
      <g fill="#c3c8d5"><circle cx="676.700" cy="346" r="7"/><circle cx="1051" cy="346" r="7"/><circle cx="1253" cy="346" r="7"/><circle cx="1570" cy="346" r="7"/><path d="M846 339h7.500v14H846zM1163 339h7.500v14h-7.500zM1364.500 339h7.500v14h-7.500z"/></g>
      <g fill="#8a8aa3"><path d="M885.500 381l8 8-8 8-8-8zM972 381l8 8-8 8-8-8zM1015.500 381l8 8-8 8-8-8zM1404.300 381l8 8-8 8-8-8zM1490.700 381l8 8-8 8-8-8zM1534 381l8 8-8 8-8-8zM900 497l8 8-8 8-8-8zM1418.700 497l8 8-8 8-8-8z"/></g>
      <use href="#chats" x="615" y="330" width="37" height="33"/>
      <use href="#robot" x="867" y="332" width="37" height="29"/><use href="#robot" x="1385.500" y="332" width="37" height="29"/>
      <use href="#braces" x="1192" y="328" width="36" height="36"/>
      <use href="#goog" x="888" y="528" width="24" height="25"/><use href="#goog" x="1406.500" y="528" width="24" height="25"/>
      <g><use href="#check" x="656" y="370" width="14" height="12"/><use href="#check" x="1030" y="370" width="14" height="12"/><use href="#check" x="1232.500" y="370" width="14" height="12"/><use href="#check" x="1549" y="370" width="14" height="12"/><use href="#check" x="893" y="557" width="14" height="12"/><use href="#check" x="1412" y="557" width="14" height="12"/></g>
      <g fill="none" stroke="#f1f3f9" stroke-width="2"><circle cx="651.500" cy="316" r="4.500" stroke-dasharray="5.070 2" stroke-dashoffset="1"/><path d="M659.500 316v-3.500h6.500M667.800 316v3.500h-6.300"/></g><path fill="#f1f3f9" d="M665 309.500l4 3-4 3zM662.500 316.500l-4 3 4 3z"/>
    </svg>
    <div class="cap" style="left:633.500px;top:396px">When chat message<br>received</div>
    <div class="cap" style="left:1210px;top:396px">Code</div>
    <div class="cap" style="left:900px;top:583.500px">Google Gemini Chat<br>Model</div>
    <div class="cap" style="left:1419px;top:583.500px">Google Gemini Chat<br>Model1</div>
    <div class="cap" style="left:949.500px;top:338px">Research</div>
    <div class="cap" style="left:1490px;top:338px">blog generation</div>
    <div class="edge" style="left:765px;top:346px">1 item</div><div class="edge" style="left:1111px;top:335px">1 item</div><div class="edge" style="left:1312.500px;top:335px">1 item</div><div class="edge" style="left:1617px;top:335px">1 item</div><div class="edge" style="left:893px;top:447px">1 item</div><div class="edge" style="left:1411.500px;top:447px">1 item</div>
    <div class="tiny" style="left:886px;top:406px">Chat Model<span style="color:#ff5c5c">*</span></div><div class="tiny" style="left:972px;top:406px">Memory</div><div class="tiny" style="left:1015.500px;top:406px">Tool</div><div class="tiny" style="left:900px;top:485px">Model</div>
    <div class="tiny" style="left:1404.500px;top:406px">Chat Model<span style="color:#ff5c5c">*</span></div><div class="tiny" style="left:1490.500px;top:406px">Memory</div><div class="tiny" style="left:1534px;top:406px">Tool</div><div class="tiny" style="left:1419px;top:485px">Model</div>

    <div class="d-flex" style="left:354px;top:580px;gap:16px">
      <div class="ctl d-flex align-items-center justify-content-center"><svg width="23" height="23" viewBox="0 0 24 24"><path class="ln" d="M8 3H5a2 2 0 0 0-2 2v3M21 8V5a2 2 0 0 0-2-2h-3M3 16v3a2 2 0 0 0 2 2h3M16 21h3a2 2 0 0 0 2-2v-3"/></svg></div>
      <div class="ctl d-flex align-items-center justify-content-center"><svg width="22" height="22" viewBox="0 0 24 24"><path class="ln" d="M11 3a8 8 0 1 0 0 16 8 8 0 0 0 0-16zM21 21l-4.300-4.300M11 8v6M8 11h6"/></svg></div>
      <div class="ctl d-flex align-items-center justify-content-center"><svg width="22" height="22" viewBox="0 0 24 24"><path class="ln" d="M11 3a8 8 0 1 0 0 16 8 8 0 0 0 0-16zM21 21l-4.300-4.300M8 11h6"/></svg></div>
      <div class="ctl d-flex align-items-center justify-content-center"><svg width="22" height="22"><use href="#undo"/></svg></div>
      <div class="ctl d-flex align-items-center justify-content-center"><svg width="22" height="21" viewBox="0 0 22 21" style="margin-top:-2px"><path class="fl" d="M0 2L2.500 0l5.500 6 6-3 1 2.500 6.600 2.200-4.100 6.600-6.900 6.200-5.300-7.500L4.500 9l1.500-1z"/><path d="M6.500 11.500L15 6" stroke="#2d2f2e" stroke-width="1"/></svg></div>
    </div>
    <div class="hidebig d-flex align-items-center justify-content-center" style="left:1041px;top:580px"><svg width="20" height="20" style="margin-right:8px"><use href="#bubblei"/></svg>Hide chat</div>
    <div class="d-flex flex-column" style="left:1843px;top:221px;gap:10.500px">
      <div class="ctl d-flex align-items-center justify-content-center"><svg width="14" height="14" viewBox="0 0 14 14"><path d="M7 0v14M0 7h14" stroke="currentColor" stroke-width="1.600"/></svg></div>
      <div class="ctl d-flex align-items-center justify-content-center"><svg width="22" height="22" viewBox="0 0 24 24"><path class="ln" d="M16 3H5a2 2 0 0 0-2 2v14a2 2 0 0 0 2 2h14a2 2 0 0 0 2-2V8zM15.500 3v4a1.500 1.500 0 0 0 1.500 1.500h4"/></svg></div>
      <div class="ctl d-flex align-items-center justify-content-center"><svg width="22" height="22" viewBox="0 0 24 24"><rect class="ln" x="3" y="3" width="18" height="18" rx="2"/><path class="ln" d="M15 3v18"/></svg></div>
    </div>
  </div></section>

  <!-- chat, logs and run data -->
  <section class="bottom d-flex">
    <div class="colx" style="width:476px">
      <div class="phead d-flex align-items-center" style="padding:0 18px 0 21px"><span class="w500">Chat</span><span class="ms-auto dim w500" style="font-size:16px">Session: b715e...</span><svg class="dim" width="19" height="19" style="margin-left:18px"><use href="#undo"/></svg></div>
      <div class="d-flex" style="height:271px">
        <div class="reply flex-grow-1" style="padding-left:31px">
          <div style="margin:-14px 0 0 31px;height:64px;font-size:16px;line-height:20px" class="w500">organization.</div>
          <h1 class="nw">Conclusion:<br>Embracing the<br>Journey from<br>Algorithms to<br>Invaluable Insights</h1>
        </div>
        <div class="sbar"><i style="top:208px;height:17px"></i></div>
      </div>
      <div class="prompt d-flex align-items-center">
        <div class="d-flex flex-column dim" style="margin:23px 0 0 25px;gap:19px"><svg width="9" height="7" viewBox="0 0 12 8"><path class="ln" d="M1.500 6.500L6 2l4.500 4.500"/></svg><svg width="9" height="7" viewBox="0 0 12 8"><path class="ln" d="M1.500 1.500L6 6l4.500-4.500"/></svg></div>
        <div class="nw" style="margin:-1px 0 0 30px">Type message, or press ‘up’ for<br>prev one</div>
        <svg class="ms-auto" width="28" height="24" viewBox="0 0 28 24" style="margin:22px 19px 0 0"><path fill="#7e8088" d="M0 0l28 12L0 24V14.500L17 12 0 9.500z"/></svg>
      </div>
    </div>
    <div class="colx" style="width:222px">
      <div class="phead d-flex align-items-center" style="padding:0 0 0 21px"><span class="w500" style="width:38px">Logs</span><svg class="dim" width="20" height="20" viewBox="0 0 24 24" style="margin-left:29px"><path class="ln" d="M10 11v6M14 11v6M19 6v14a2 2 0 0 1-2 2H7a2 2 0 0 1-2-2V6M3 6h18M8 6V4a2 2 0 0 1 2-2h4a2 2 0 0 1 2 2v2"/></svg><span class="dim" style="margin-left:2px;font-size:16.200px">Clear execution</span></div>
      <div class="d-flex align-items-center dim" style="height:42px;padding-left:21px;font-size:16.200px"><span style="width:102px">Success i...</span><div class="vsep"></div><span style="margin-left:11px">4,728 ...</span></div>
      <div class="lrow d-flex align-items-center"><svg width="22" height="20"><use href="#chats"/></svg><span style="margin-left:11px">When chat mes...</span></div>
      <div class="lrow d-flex align-items-center"><svg width="22" height="18"><use href="#robot"/></svg><span style="margin-left:11px">Research</span><svg class="ms-auto soft" width="12" height="8"><use href="#down"/></svg></div>
      <div class="lrow d-flex align-items-center"><div class="elbow"></div><svg width="20" height="20"><use href="#goog"/></svg><span style="margin-left:11px">Google Ge...</span></div>
      <div class="lrow d-flex align-items-center"><svg width="22" height="22"><use href="#braces"/></svg><span style="margin-left:11px">Code</span></div>
      <div class="lrow sel d-flex align-items-center"><svg width="22" height="18"><use href="#robot"/></svg><span style="margin-left:11px">blog genera...</span><svg class="ms-auto soft" width="12" height="8"><use href="#down"/></svg></div>
      <div class="lrow d-flex align-items-center"><div class="elbow"></div><svg width="20" height="20"><use href="#goog"/></svg><span style="margin-left:11px">Google Ge...</span></div>
    </div>
    <div class="flex-grow-1">
      <div class="phead d-flex align-items-center dim" style="padding:0 22px 0 11px;font-size:15.950px">
        <svg width="22" height="18" color="#f1f3f9"><use href="#robot"/></svg><span class="w500" style="margin-left:10px;color:#f1f3f9;width:131px;font-size:16.100px">blog generation</span>
        <span style="width:155px">Success in 15.436s</span><div class="vsep"></div><span style="margin-left:11px">3,345 Tokens</span>
        <div class="obtn ms-auto d-flex align-items-center justify-content-center text-white" style="width:62px">Input</div>
        <div class="obtn d-flex align-items-center justify-content-center text-white" style="width:75px;margin-left:11px">Output</div>
        <svg width="14" height="4" style="margin-left:21px"><use href="#dots3"/></svg><svg class="soft" width="12" height="8" style="margin-left:22px"><use href="#down"/></svg>
      </div>
      <div class="d-flex">
        <div class="colx" style="width:445px;height:378px">
          <div class="d-flex align-items-center dim" style="height:45px;padding:1px 11px 0 11px"><span class="sp">INPUT</span><span class="ms-auto" style="font-size:16px">1 item</span></div>
          <div class="d-flex" style="height:333px;overflow:hidden">
            <div class="flex-grow-1" style="padding-left:21px">
              <div class="d-flex" style="height:41.500px"><svg class="soft" width="12" height="8" style="margin:10px 10px 0 0"><use href="#down"/></svg><div class="tag d-flex align-items-center" style="width:129px;padding-left:10px"><svg width="14" height="12" style="margin-right:18px"><use href="#list"/></svg>blog_topic</div></div>
              <div class="d-flex" style="height:84px;padding-left:54px"><div class="tag d-flex align-items-center" style="width:151px;padding-left:10px"><span class="ab">AB</span><span style="margin-left:17px">blog_topic[0]</span></div><div class="val" style="padding-top:11px">From Algorithms to<br>Insights: The Journey<br>of Turning Data into<br>Decisions</div></div>
              <div class="d-flex" style="height:41px"><svg class="soft" width="12" height="8" style="margin:10px 10px 0 0"><use href="#down"/></svg><div class="tag d-flex align-items-center" style="width:141px;padding-left:10px"><svg width="14" height="12" style="margin-right:18px"><use href="#list"/></svg>background</div></div>
              <div class="d-flex" style="height:132px;padding-left:54px"><div class="tag d-flex align-items-center" style="width:163px;padding-left:10px"><span class="ab">AB</span><span style="margin-left:17px">background[0]</span></div><div class="val" style="padding-top:11px">Early forms of data<br>analysis date back to<br>statistical methods<br>used in the 17th<br>century for<br>governmental record-<br>keeping.</div></div>
              <div class="d-flex" style="height:60px;padding-left:54px"><div class="tag d-flex align-items-center" style="width:160px;padding-left:10px"><span class="ab">AB</span><span style="margin-left:17px">background[1]</span></div><div class="val" style="padding-top:11px">The rise of computers<br>in the mid-20th</div></div>
            </div>
            <div class="sbar"><i style="top:18px;height:28px"></i></div>
          </div>
        </div>
        <div class="flex-grow-1">
          <div class="d-flex align-items-center dim" style="height:45px;padding:1px 11px 0 11px"><span class="sp">OUTPUT</span><span class="ms-auto" style="font-size:16px">1 item</span></div>
          <div class="d-flex" style="height:333px">
            <div class="otable" style="margin-left:10px"><div class="oh">output</div><div class="ob"><div style="margin-top:-11px">Forbes. Retrieved from<br>[https://www.forbes.com/sites/forbesanalytics/202<br>1/03/17/data-driven-organizations-are-23x-more-<br>likely-to-acquire-customers-and-6x-more-likely-<br>to-retain-them/]<br>(https://www.forbes.com/sites/forbesanalytics/202<br>1/03/17/data-driven-organizations-are-23x-more-<br>likely-to-acquire-customers-and-6x-more-likely-<br>to-retain-them/)</div></div></div>
            <div class="sbar ms-auto"><i style="top:298px;height:17px"></i></div>
          </div>
        </div>
      </div>
    </div>
  </section>
</main>
</div>
</div>
</div>
</body>
</html>
